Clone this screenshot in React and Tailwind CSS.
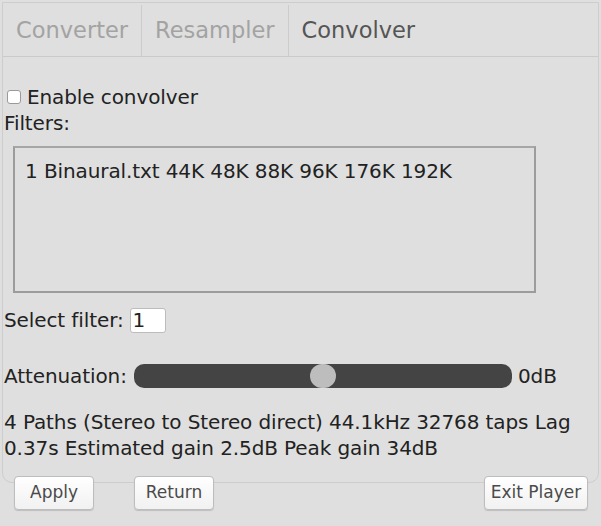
import React from "react";

const Tab = ({ label, active, border }) => (
  <div
    className={
      "flex items-center h-full px-[13px] text-[22.5px] " +
      (active ? "text-[#555555] " : "text-[#a3a3a3] ") +
      (border ? "border-r border-[#cccccc]" : "")
    }
  >
    {label}
  </div>
);

const Button = ({ label, className }) => (
  <button
    className={
      "h-[34px] rounded-[4px] border border-[#bdbdbd] bg-gradient-to-b from-[#ffffff] to-[#f1f1f1] text-[17px] text-[#4a4a4a] whitespace-nowrap shadow-[0_1px_1px_rgba(0,0,0,0.15)] " +
      (className || "")
    }
  >
    {label}
  </button>
);

export default function App() {
  return (
    <div
      className="w-[601px] h-[526px] bg-[#dfdfdf] text-[#222222] overflow-hidden"
      style={{ fontFamily: '"DejaVu Sans", "Open Sans", sans-serif' }}
    >
      {/* main panel */}
      <div className="mx-[2px] mt-[2px] h-[481px] border border-[#cdcdcd] rounded-b-[10px] flex flex-col">
        {/* tabs */}
        <div className="h-[54px] flex border-b border-[#cacaca] pt-[2px]">
          <Tab label="Converter" border />
          <Tab label="Resampler" border />
          <Tab label="Convolver" active />
        </div>

        <div className="flex flex-col pl-[1px] text-[20px] leading-[26px] tracking-[-0.1px]">
          <label className="flex items-center mt-[27px] gap-[6px]">
            <span className="w-[14px] h-[14px] rounded-[3px] border border-[#9a9a9a] bg-white ml-[3px]" />
            <span>Enable convolver</span>
          </label>
          <div>Filters:</div>

          <div className="mt-[10px] ml-[9px] w-[523px] h-[147px] border-2 border-[#9c9c9c] border-t-[#a6a6a6] px-[10px] pt-[10px]">
            1 Binaural.txt 44K 48K 88K 96K 176K 192K
          </div>

          <div className="flex items-center mt-[14px] gap-[6px]">
            <span>Select filter:</span>
            <span className="w-[36px] h-[25px] bg-white border border-[#bcbcbc] rounded-[3px] leading-[23px] pl-[2px]">
              1
            </span>
          </div>

          <div className="flex items-center mt-[30px]">
            <span className="w-[130px] whitespace-nowrap">Attenuation:</span>
            <div className="relative w-[378px] h-[24px] rounded-[10px] bg-[#444444]">
              <div className="absolute left-[176px] top-0 w-[26px] h-[24px] rounded-full bg-[#bdbdbd]" />
            </div>
            <span className="ml-[6px]">0dB</span>
          </div>

          <div className="mt-[20px] whitespace-nowrap">
            4 Paths (Stereo to Stereo direct) 44.1kHz 32768 taps Lag
            <br />
            0.37s Estimated gain 2.5dB Peak gain 34dB
          </div>
        </div>
      </div>

      {/* bottom buttons */}
      <div className="relative flex -mt-[7px] pl-[14px] pr-[13px]">
        <Button label="Apply" className="w-[80px]" />
        <Button label="Return" className="w-[80px] ml-[40px]" />
        <Button label="Exit Player" className="ml-auto w-[104px]" />
      </div>
    </div>
  );
}
